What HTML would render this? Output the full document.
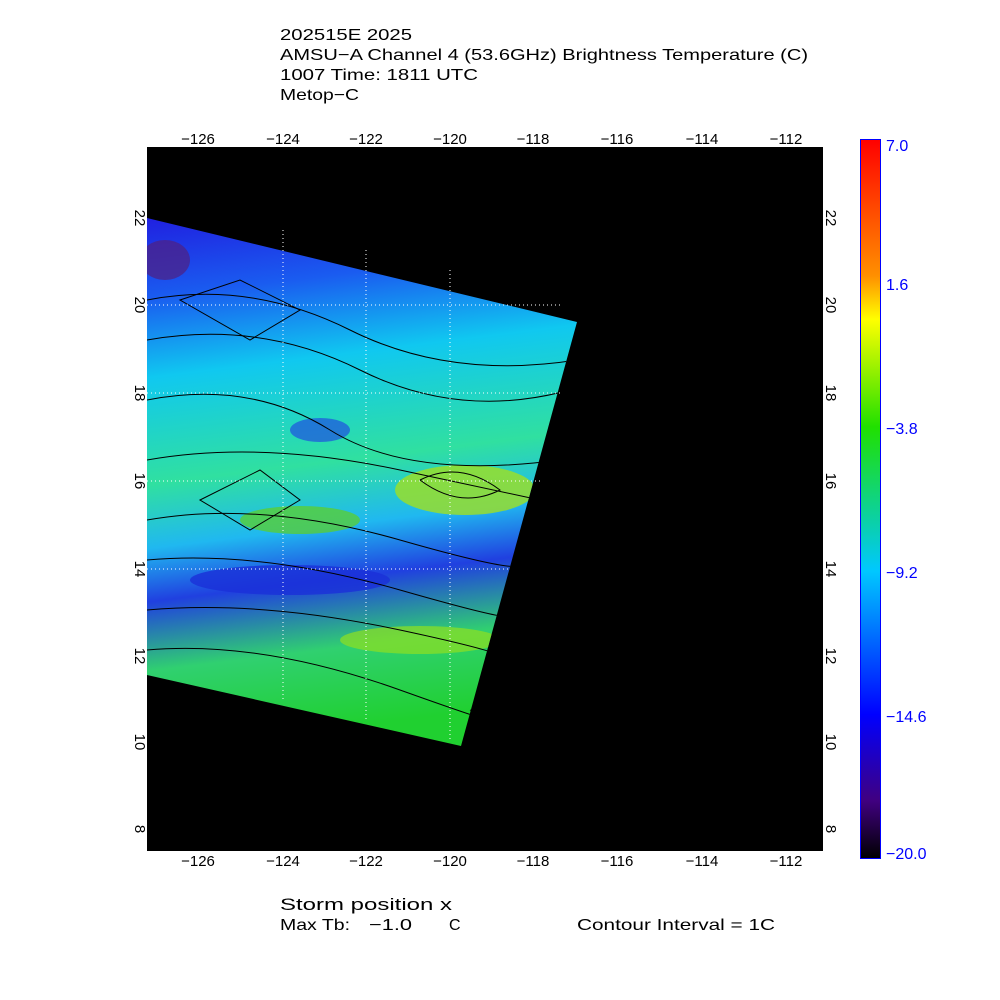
<!DOCTYPE html>
<html><head><meta charset="utf-8"><style>body{margin:0;background:#fff}svg{display:block}text{font-family:"Liberation Sans",sans-serif}</style></head><body>
<svg width="1000" height="1000" viewBox="0 0 1000 1000" xmlns="http://www.w3.org/2000/svg">
<defs>
<linearGradient id="cb" x1="0" y1="0" x2="0" y2="1">
<stop offset="0" stop-color="#ff0000"/><stop offset="0.19" stop-color="#ff9000"/><stop offset="0.25" stop-color="#ffff00"/><stop offset="0.4" stop-color="#20e000"/><stop offset="0.6" stop-color="#00c8ff"/><stop offset="0.8" stop-color="#0000ff"/><stop offset="0.92" stop-color="#400080"/><stop offset="1" stop-color="#000000"/>
</linearGradient>
<linearGradient id="sw" x1="0" y1="0" x2="0.1" y2="1">
<stop offset="0" stop-color="#2020e0"/><stop offset="0.15" stop-color="#1a5cf0"/><stop offset="0.3" stop-color="#10c8f0"/><stop offset="0.5" stop-color="#30e0a0"/><stop offset="0.62" stop-color="#20b8f0"/><stop offset="0.72" stop-color="#2040e0"/><stop offset="0.85" stop-color="#30d070"/><stop offset="1" stop-color="#20d030"/>
</linearGradient>
<clipPath id="cp"><polygon points="147,218 577,322 461,746 147,675"/></clipPath>
</defs>
<g font-size="16">
<text x="280" y="40" textLength="132" lengthAdjust="spacingAndGlyphs">202515E 2025</text>
<text x="280" y="60" textLength="528" lengthAdjust="spacingAndGlyphs">AMSU−A Channel 4 (53.6GHz) Brightness Temperature (C)</text>
<text x="280" y="80" textLength="198" lengthAdjust="spacingAndGlyphs">1007 Time: 1811 UTC</text>
<text x="280" y="100" textLength="79" lengthAdjust="spacingAndGlyphs">Metop−C</text>
</g>
<rect x="146" y="146" width="678" height="706" fill="#000" stroke="#fff" stroke-width="2"/>
<polygon points="147,218 577,322 461,746 147,675" fill="url(#sw)"/>
<g clip-path="url(#cp)">
<ellipse cx="465" cy="490" rx="70" ry="25" fill="#a0e020" opacity="0.8"/>
<ellipse cx="300" cy="520" rx="60" ry="14" fill="#60d020" opacity="0.7"/>
<ellipse cx="290" cy="580" rx="100" ry="15" fill="#1a30d8" opacity="0.8"/>
<ellipse cx="420" cy="640" rx="80" ry="14" fill="#90e020" opacity="0.7"/>
<ellipse cx="320" cy="430" rx="30" ry="12" fill="#2050e0" opacity="0.7"/>
<ellipse cx="165" cy="260" rx="25" ry="20" fill="#502080" opacity="0.7"/>
<g fill="none" stroke="#000" stroke-width="1">
<path d="M147,300 Q250,280 350,330 T577,360"/><path d="M147,340 Q260,320 360,370 T570,390"/>
<path d="M147,400 Q250,380 330,430 T560,460"/><path d="M147,460 Q260,440 400,470 T540,500"/>
<path d="M147,520 Q260,500 400,540 T520,560"/><path d="M147,560 Q260,550 400,590 T500,610"/>
<path d="M147,610 Q260,600 400,630 T490,660"/><path d="M147,650 Q260,640 400,690 T470,710"/>
<path d="M200,500 L260,470 L300,500 L250,530 Z"/><path d="M420,480 Q460,460 500,490 Q460,510 420,480"/>
<path d="M180,300 L240,280 L300,310 L250,340 Z"/>
</g>
</g>
<g stroke="#fff" fill="none" stroke-dasharray="1,3"><line x1="147" y1="305" x2="560" y2="305"/><line x1="147" y1="393" x2="560" y2="393"/><line x1="147" y1="481" x2="540" y2="481"/><line x1="147" y1="569" x2="510" y2="569"/><line x1="283" y1="230" x2="283" y2="700"/><line x1="366" y1="250" x2="366" y2="720"/><line x1="450" y1="270" x2="450" y2="740"/></g>
<g font-size="15" text-anchor="middle">
<text x="198" y="144">−126</text><text x="283" y="144">−124</text><text x="366" y="144">−122</text><text x="450" y="144">−120</text><text x="533" y="144">−118</text><text x="617" y="144">−116</text><text x="702" y="144">−114</text><text x="786" y="144">−112</text>
<text x="198" y="866">−126</text><text x="283" y="866">−124</text><text x="366" y="866">−122</text><text x="450" y="866">−120</text><text x="533" y="866">−118</text><text x="617" y="866">−116</text><text x="702" y="866">−114</text><text x="786" y="866">−112</text>
</g>
<g font-size="15" text-anchor="middle">
<text transform="translate(135,218) rotate(90)">22</text><text transform="translate(135,305) rotate(90)">20</text><text transform="translate(135,393) rotate(90)">18</text><text transform="translate(135,481) rotate(90)">16</text><text transform="translate(135,569) rotate(90)">14</text><text transform="translate(135,656) rotate(90)">12</text><text transform="translate(135,742) rotate(90)">10</text><text transform="translate(135,829) rotate(90)">8</text>
<text transform="translate(826,218) rotate(90)">22</text><text transform="translate(826,305) rotate(90)">20</text><text transform="translate(826,393) rotate(90)">18</text><text transform="translate(826,481) rotate(90)">16</text><text transform="translate(826,569) rotate(90)">14</text><text transform="translate(826,656) rotate(90)">12</text><text transform="translate(826,742) rotate(90)">10</text><text transform="translate(826,829) rotate(90)">8</text>
</g>
<rect x="860.5" y="139.5" width="20" height="719" fill="url(#cb)" stroke="#00f"/>
<g font-size="16" fill="#00f">
<text x="886" y="151">7.0</text><text x="886" y="290">1.6</text><text x="886" y="434">−3.8</text><text x="886" y="578">−9.2</text><text x="886" y="722">−14.6</text><text x="886" y="859">−20.0</text>
</g>
<text x="280" y="910" font-size="17" textLength="172" lengthAdjust="spacingAndGlyphs">Storm position x</text>
<text x="280" y="930" font-size="16" textLength="70" lengthAdjust="spacingAndGlyphs">Max Tb:</text>
<text x="369" y="930" font-size="16" textLength="43" lengthAdjust="spacingAndGlyphs">−1.0</text>
<text x="449" y="930" font-size="16">C</text>
<text x="577" y="930" font-size="16" textLength="198" lengthAdjust="spacingAndGlyphs">Contour Interval = 1C</text>
</svg>
</body></html>
